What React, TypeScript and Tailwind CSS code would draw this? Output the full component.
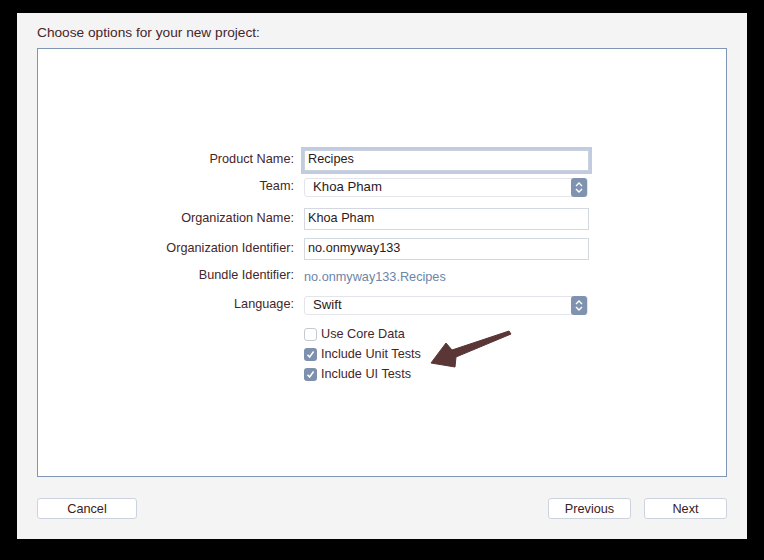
const font = { fontFamily: '"Liberation Sans", Arial, sans-serif' };

const Stepper = () => (
  <div className="w-[16px] h-[19px] bg-[#7f93b1] rounded-[3px] flex items-center justify-center">
    <svg width="10" height="13" viewBox="0 0 10 13" fill="none" stroke="#fff" strokeWidth="1.4">
      <path d="M2 5 L5 2 L8 5" />
      <path d="M2 8 L5 11 L8 8" />
    </svg>
  </div>
);

const Row = ({ label, h, className, children }: { label: string; h: string; className?: string; children: React.ReactNode }) => (
  <div className={`flex items-center ${h} ${className ?? ""}`}>
    <div className="w-[257px] text-right text-[12.7px] text-[#45262a] pr-[1px]">{label}</div>
    <div className="ml-[9px]">{children}</div>
  </div>
);

const Check = ({ checked, label, className }: { checked?: boolean; label: string; className?: string }) => (
  <div className={`flex items-center h-[20px] ${className ?? ""}`}>
    <div className="w-[257px]" />
    <div className="ml-[9px] flex items-center gap-[4px]">
      {checked ? (
        <div className="w-[13px] h-[13px] rounded-[3px] bg-[#7d90ae] flex items-center justify-center">
          <svg width="9" height="9" viewBox="0 0 9 9" fill="none" stroke="#fff" strokeWidth="1.5">
            <path d="M1.5 4.8 L3.6 7 L7.6 1.5" />
          </svg>
        </div>
      ) : (
        <div className="w-[13px] h-[13px] rounded-[3px] bg-white border border-[#c4c9d2]" />
      )}
      <span className="text-[12.7px] text-[#45262a]">{label}</span>
    </div>
  </div>
);

export default function App() {
  return (
    <div className="w-[764px] h-[560px] bg-black relative overflow-hidden" style={font}>
      <div className="absolute left-[17px] top-[13px] w-[730px] h-[526px] bg-[#f4f4f4] pl-[20px] pt-[12px]">
        <div className="h-[16px] leading-[16px] text-[13.7px] text-[#45262a]">Choose options for your new project:</div>

        <div className="mt-[7px] w-[690px] h-[429px] bg-white border border-[#8196b4] pt-[98px]">
          <Row label="Product Name:" h="h-[26px]">
            <div className="w-[285px] h-[21px] border border-[#c9d1de] ring-[3px] ring-[#c1cce0] flex items-center pl-[3px] text-[12.7px] text-[#2b1a1a]">
              Recipes
            </div>
          </Row>
          <Row label="Team:" h="h-[20px]" className="mt-[4px]">
            <div className="w-[284px] h-[19px] bg-white border border-[#e3e5ea] rounded-[3px] flex items-center justify-between pl-[8px]">
              <span className="text-[13.2px] text-[#2b1a1a]">Khoa Pham</span>
              <Stepper />
            </div>
          </Row>
          <Row label="Organization Name:" h="h-[22px]" className="mt-[11px]">
            <div className="w-[285px] h-[22px] border border-[#d4d8e0] flex items-center pl-[3px] text-[12.7px] text-[#2b1a1a]">
              Khoa Pham
            </div>
          </Row>
          <Row label="Organization Identifier:" h="h-[22px]" className="mt-[8px]">
            <div className="w-[285px] h-[22px] border border-[#d4d8e0] flex items-center pl-[3px] text-[12.7px] text-[#2b1a1a]">
              no.onmyway133
            </div>
          </Row>
          <Row label="Bundle Identifier:" h="h-[20px]" className="mt-[6px]">
            <span className="text-[12.7px] text-[#6d85a7]">no.onmyway133.Recipes</span>
          </Row>
          <Row label="Language:" h="h-[20px]" className="mt-[9px]">
            <div className="w-[284px] h-[19px] bg-white border border-[#e3e5ea] rounded-[3px] flex items-center justify-between pl-[8px]">
              <span className="text-[13.2px] text-[#2b1a1a]">Swift</span>
              <Stepper />
            </div>
          </Row>
          <Check label="Use Core Data" className="mt-[10px]" />
          <Check label="Include Unit Tests" checked />
          <Check label="Include UI Tests" checked />
        </div>

        <div className="mt-[21px] w-[690px] flex items-center">
          <button className="w-[100px] h-[21px] bg-white border border-[#cdd3de] rounded-[3px] text-[12.7px] text-[#3a2020] pt-[1px]">
            Cancel
          </button>
          <div className="flex-1" />
          <button className="w-[83px] h-[21px] bg-white border border-[#cdd3de] rounded-[3px] text-[12.7px] text-[#3a2020] pt-[1px]">
            Previous
          </button>
          <button className="ml-[13px] w-[83px] h-[21px] bg-white border border-[#cdd3de] rounded-[3px] text-[12.7px] text-[#3a2020] pt-[1px]">
            Next
          </button>
        </div>
      </div>

      {/* annotation arrow */}
      <svg className="absolute left-0 top-0 pointer-events-none" width="764" height="560">
        <polygon
          points="509,331 452,350 446,343 431,363 455,367 456,357 511,334"
          fill="#5a3636"
          stroke="#5a3636"
          strokeWidth="1"
          strokeLinejoin="round"
        />
      </svg>
    </div>
  );
}
